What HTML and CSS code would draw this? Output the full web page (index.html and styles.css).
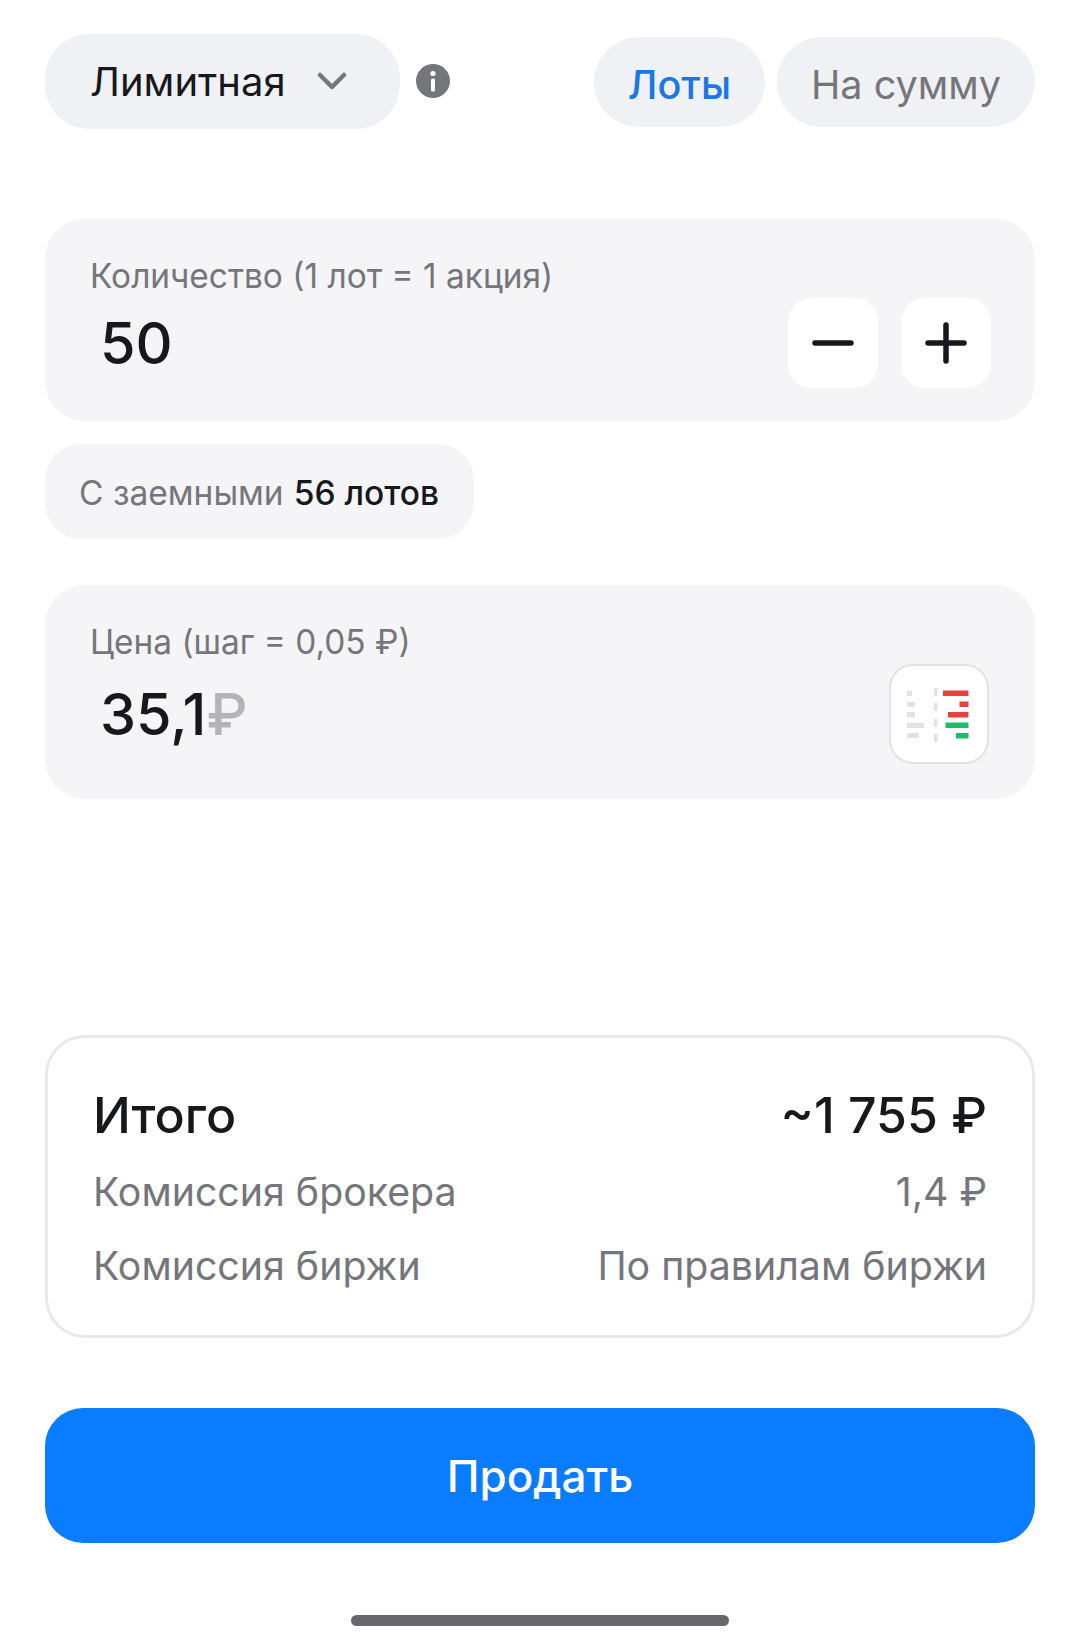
FILE: index.html
```html
<!DOCTYPE html>
<html lang="ru">
<head>
    <meta charset="UTF-8">
    <meta name="viewport" content="width=device-width, initial-scale=1.0">
    <title>Заявка</title>
    <link rel="stylesheet" href="styles.css">
</head>
<body>
    <div class="page">
        <div class="top-row">
            <div class="order-type">
                <span>Лимитная</span>
                <svg class="chevron" width="30" height="20" viewBox="0 0 30 20"><path d="M3 3l12 12L27 3" fill="none" stroke="#77787e" stroke-width="4.5" stroke-linecap="round" stroke-linejoin="round"/></svg>
            </div>
            <svg class="info" width="34" height="34" viewBox="0 0 34 34"><circle cx="17" cy="17" r="17" fill="#75767c"/><circle cx="17" cy="9.5" r="2.6" fill="#fff"/><rect x="15" y="14.5" width="4" height="13" rx="1.5" fill="#fff"/></svg>
            <div class="mode-tabs">
                <div class="tab tab-active">Лоты</div>
                <div class="tab">На сумму</div>
            </div>
        </div>

        <div class="field field-qty">
            <div class="field-label">Количество (1 лот = 1 акция)</div>
            <div class="field-row">
                <div class="field-value">50</div>
                <div class="steppers">
                    <div class="step"><svg width="44" height="44" viewBox="0 0 44 44"><path d="M4 22h36" stroke="#17181c" stroke-width="5.5" stroke-linecap="round"/></svg></div>
                    <div class="step"><svg width="44" height="44" viewBox="0 0 44 44"><path d="M4 22h36M22 4v36" stroke="#17181c" stroke-width="5.5" stroke-linecap="round"/></svg></div>
                </div>
            </div>
        </div>

        <div class="margin-chip">С заемными <b>56 лотов</b></div>

        <div class="field field-price">
            <div class="field-label">Цена (шаг = 0,05 ₽)</div>
            <div class="field-row">
                <div class="field-value">35,1<span class="currency">₽</span></div>
                <div class="book-btn">
                    <svg width="66" height="56" viewBox="0 0 66 56">
                        <rect x="0" y="5" width="5" height="5" fill="#e2e2e4"/>
                        <rect x="0" y="16" width="8" height="5" fill="#e2e2e4"/>
                        <rect x="0" y="26" width="8" height="5" fill="#e2e2e4"/>
                        <rect x="0" y="37" width="17" height="5" fill="#e2e2e4"/>
                        <rect x="0" y="47" width="12" height="5" fill="#e2e2e4"/>
                        <rect x="27" y="2" width="3.5" height="8" fill="#e2e2e4"/>
                        <rect x="27" y="17" width="3.5" height="8" fill="#e2e2e4"/>
                        <rect x="27" y="33" width="3.5" height="8" fill="#e2e2e4"/>
                        <rect x="27" y="48" width="3.5" height="8" fill="#e2e2e4"/>
                        <rect x="36" y="4.5" width="25.5" height="5.5" fill="#e8423f"/>
                        <rect x="52.5" y="15.5" width="9" height="5.5" fill="#e8423f"/>
                        <rect x="41" y="26" width="20.5" height="5.5" fill="#e8423f"/>
                        <rect x="38.5" y="36.5" width="23" height="5.5" fill="#20bb68"/>
                        <rect x="49" y="47" width="12.5" height="5.5" fill="#20bb68"/>
                    </svg>
                </div>
            </div>
        </div>

        <div class="summary">
            <div class="summary-row summary-total">
                <span>Итого</span>
                <span>~1 755 ₽</span>
            </div>
            <div class="summary-row">
                <span>Комиссия брокера</span>
                <span>1,4 ₽</span>
            </div>
            <div class="summary-row">
                <span>Комиссия биржи</span>
                <span>По правилам биржи</span>
            </div>
        </div>

        <div class="sell-btn">Продать</div>
        <div class="home-bar"></div>
    </div>
</body>
</html>
```

FILE: styles.css
```css
html, body {
    margin: 0;
    background-color: #fff;
}
.page {
    width: 1080px;
    height: 1643px;
    box-sizing: border-box;
    padding: 34px 45px 0;
    font-family: Inter, "Noto Sans", sans-serif;
    color: #17181c;
    overflow: hidden;
}
.top-row {
    display: flex;
    align-items: flex-start;
    height: 95px;
}
.order-type {
    width: 355px;
    height: 95px;
    box-sizing: border-box;
    padding: 0 53px 0 45px;
    border-radius: 44px;
    background-color: #f0f1f5;
    display: flex;
    align-items: center;
    justify-content: space-between;
    font-size: 40px;
}
.chevron {
    margin-top: 0;
}
.info {
    margin: 30px 0 0 16px;
}
.mode-tabs {
    display: flex;
    gap: 12px;
    margin: 3px 0 0 auto;
}
.tab {
    height: 90px;
    padding: 5px 34px 0;
    border-radius: 45px;
    background-color: #f0f1f5;
    display: flex;
    align-items: center;
    font-size: 39.6px;
    color: #75767c;
    box-sizing: border-box;
}
.tab-active {
    color: #1a78e6;
    font-weight: 500;
}
.field {
    background-color: #f5f5f7;
    border-radius: 40px;
    box-sizing: border-box;
    padding: 37px 44px 0 45px;
}
.field-qty {
    height: 202px;
    margin-top: 90px;
}
.field-price {
    height: 214px;
    margin-top: 46px;
}
.field-label {
    font-size: 33.4px;
    line-height: 40px;
    color: #75767c;
}
.field-row {
    display: flex;
    align-items: center;
    justify-content: space-between;
}
.field-qty .field-row {
    margin-top: 2px;
}
.field-price .field-row {
    margin-top: 2px;
}
.field-value {
    font-size: 57.5px;
    line-height: 68px;
    padding-left: 10px;
    font-weight: 500;
}
.currency {
    color: #b4b4b8;
}
.steppers {
    display: flex;
    gap: 23px;
}
.step {
    width: 90px;
    height: 90px;
    border-radius: 24px;
    background-color: #fff;
    display: flex;
    align-items: center;
    justify-content: center;
}
.margin-chip {
    width: 429px;
    height: 95px;
    margin-top: 23px;
    box-sizing: border-box;
    padding: 2px 0 0 34px;
    border-radius: 36px;
    background-color: #f5f5f7;
    display: flex;
    align-items: center;
    gap: 0.3em;
    font-size: 33.5px;
    color: #75767c;
}
.margin-chip b {
    font-weight: 500;
    color: #17181c;
}
.book-btn {
    width: 100px;
    height: 100px;
    box-sizing: border-box;
    border: 2px solid #e2e2e4;
    border-radius: 24px;
    background-color: #fff;
    display: flex;
    align-items: center;
    justify-content: center;
    padding-left: 2px;
    margin-right: 2px;
}
.summary {
    height: 303px;
    margin-top: 236px;
    box-sizing: border-box;
    border: 3px solid #e8e9ec;
    border-radius: 40px;
    padding: 37px 45px 0 45px;
}
.summary-row {
    display: flex;
    justify-content: space-between;
    font-size: 39.3px;
    line-height: 74px;
    color: #75767c;
}
.summary-total {
    font-size: 50px;
    line-height: 80px;
    color: #17181c;
    font-weight: 500;
}
.sell-btn {
    height: 135px;
    margin-top: 70px;
    border-radius: 38px;
    background-color: #0a7cff;
    color: #fff;
    font-size: 44px;
    font-weight: 500;
    display: flex;
    align-items: center;
    justify-content: center;
}
.home-bar {
    width: 378px;
    height: 11px;
    margin: 72px auto 0;
    border-radius: 6px;
    background-color: #67686c;
}
```
